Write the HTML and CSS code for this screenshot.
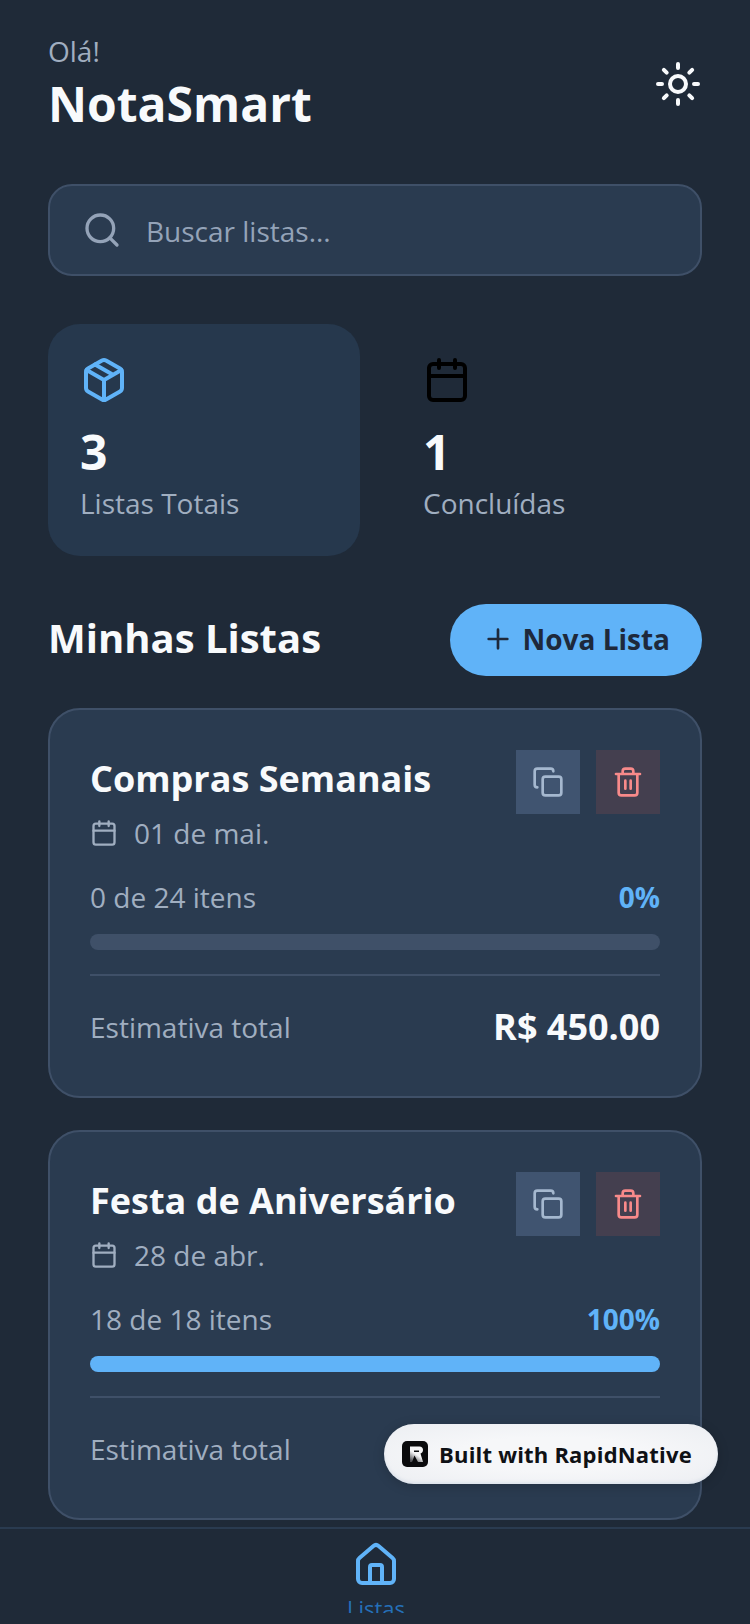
FILE: index.html
```html
<!DOCTYPE html>
<html lang="pt-BR">
<head>
    <meta charset="UTF-8">
    <meta name="viewport" content="width=device-width, initial-scale=1.0">
    <title>NotaSmart</title>
    <link rel="stylesheet" href="styles.css">
</head>
<body>
    <div class="app">
        <main class="content">
            <header class="header">
                <div>
                    <p class="greeting">Olá!</p>
                    <h1 class="brand">NotaSmart</h1>
                </div>
                <svg class="theme-icon" viewBox="0 0 24 24" fill="none" stroke="#f8fafc" stroke-width="2" stroke-linecap="round" stroke-linejoin="round">
                    <circle cx="12" cy="12" r="4"/>
                    <path d="M12 2v2M12 20v2M4.930 4.930l1.410 1.410M17.660 17.660l1.410 1.410M2 12h2M20 12h2M6.340 17.660l-1.410 1.410M19.070 4.930l-1.410 1.410"/>
                </svg>
            </header>

            <div class="search">
                <svg class="search-icon" viewBox="0 0 24 24" fill="none" stroke="#94a3b8" stroke-width="2" stroke-linecap="round" stroke-linejoin="round">
                    <circle cx="11" cy="11" r="8"/>
                    <path d="M21 21l-4.300-4.300"/>
                </svg>
                <span class="search-text">Buscar listas...</span>
            </div>

            <section class="stats">
                <div class="stat stat-active">
                    <svg class="stat-icon" viewBox="0 0 24 24" fill="none" stroke="#60b3f8" stroke-width="2" stroke-linecap="round" stroke-linejoin="round">
                        <path d="M21 8a2 2 0 0 0-1-1.730l-7-4a2 2 0 0 0-2 0l-7 4A2 2 0 0 0 3 8v8a2 2 0 0 0 1 1.730l7 4a2 2 0 0 0 2 0l7-4A2 2 0 0 0 21 16Z"/>
                        <path d="M3.300 7L12 12l8.700-5M12 22V12M7.500 4.270l9 5.150"/>
                    </svg>
                    <div class="stat-value">3</div>
                    <div class="stat-label">Listas Totais</div>
                </div>
                <div class="stat">
                    <svg class="stat-icon" viewBox="0 0 24 24" fill="none" stroke="#000" stroke-width="2" stroke-linecap="round" stroke-linejoin="round">
                        <rect x="3" y="4" width="18" height="18" rx="2"/>
                        <path d="M8 2v4M16 2v4M3 10h18"/>
                    </svg>
                    <div class="stat-value">1</div>
                    <div class="stat-label">Concluídas</div>
                </div>
            </section>

            <div class="section-head">
                <h2 class="section-title">Minhas Listas</h2>
                <button class="new-btn">
                    <svg class="plus-icon" viewBox="0 0 24 24" fill="none" stroke="#1e293b" stroke-width="2" stroke-linecap="round">
                        <path d="M5 12h14M12 5v14"/>
                    </svg>
                    Nova Lista
                </button>
            </div>

            <article class="card">
                <div class="card-top">
                    <div>
                        <h3 class="card-title">Compras Semanais</h3>
                        <div class="card-date">
                            <svg class="date-icon" viewBox="0 0 24 24" fill="none" stroke="#a0aec0" stroke-width="2" stroke-linecap="round" stroke-linejoin="round">
                                <rect x="3" y="4" width="18" height="18" rx="2"/>
                                <path d="M8 2v4M16 2v4M3 10h18"/>
                            </svg>
                            01 de mai.
                        </div>
                    </div>
                    <div class="card-actions">
                        <div class="action action-copy">
                            <svg class="action-icon" viewBox="0 0 24 24" fill="none" stroke="#a5b8cf" stroke-width="2" stroke-linecap="round" stroke-linejoin="round">
                                <rect x="8" y="8" width="14" height="14" rx="2"/>
                                <path d="M4 16c-1.100 0-2-.9-2-2V4c0-1.100.9-2 2-2h10c1.100 0 2 .9 2 2"/>
                            </svg>
                        </div>
                        <div class="action action-delete">
                            <svg class="action-icon" viewBox="0 0 24 24" fill="none" stroke="#f88a8a" stroke-width="2" stroke-linecap="round" stroke-linejoin="round">
                                <path d="M3 6h18M19 6v14a2 2 0 0 1-2 2H7a2 2 0 0 1-2-2V6M8 6V4a2 2 0 0 1 2-2h4a2 2 0 0 1 2 2v2M10 11v6M14 11v6"/>
                            </svg>
                        </div>
                    </div>
                </div>
                <div class="progress-row">
                    <span>0 de 24 itens</span>
                    <span class="percent">0%</span>
                </div>
                <div class="track"><div class="fill" style="width: 0%"></div></div>
                <div class="card-foot">
                    <span class="foot-label">Estimativa total</span>
                    <span class="price">R$ 450.00</span>
                </div>
            </article>

            <article class="card">
                <div class="card-top">
                    <div>
                        <h3 class="card-title">Festa de Aniversário</h3>
                        <div class="card-date">
                            <svg class="date-icon" viewBox="0 0 24 24" fill="none" stroke="#a0aec0" stroke-width="2" stroke-linecap="round" stroke-linejoin="round">
                                <rect x="3" y="4" width="18" height="18" rx="2"/>
                                <path d="M8 2v4M16 2v4M3 10h18"/>
                            </svg>
                            28 de abr.
                        </div>
                    </div>
                    <div class="card-actions">
                        <div class="action action-copy">
                            <svg class="action-icon" viewBox="0 0 24 24" fill="none" stroke="#a5b8cf" stroke-width="2" stroke-linecap="round" stroke-linejoin="round">
                                <rect x="8" y="8" width="14" height="14" rx="2"/>
                                <path d="M4 16c-1.100 0-2-.9-2-2V4c0-1.100.9-2 2-2h10c1.100 0 2 .9 2 2"/>
                            </svg>
                        </div>
                        <div class="action action-delete">
                            <svg class="action-icon" viewBox="0 0 24 24" fill="none" stroke="#f88a8a" stroke-width="2" stroke-linecap="round" stroke-linejoin="round">
                                <path d="M3 6h18M19 6v14a2 2 0 0 1-2 2H7a2 2 0 0 1-2-2V6M8 6V4a2 2 0 0 1 2-2h4a2 2 0 0 1 2 2v2M10 11v6M14 11v6"/>
                            </svg>
                        </div>
                    </div>
                </div>
                <div class="progress-row">
                    <span>18 de 18 itens</span>
                    <span class="percent">100%</span>
                </div>
                <div class="track"><div class="fill" style="width: 100%"></div></div>
                <div class="card-foot">
                    <span class="foot-label">Estimativa total</span>
                </div>
            </article>
        </main>

        <nav class="tabbar">
            <div class="tab">
                <svg class="tab-icon" viewBox="0 0 24 24" fill="none" stroke="#60b3f8" stroke-width="2" stroke-linecap="round" stroke-linejoin="round">
                    <path d="M15 21v-8a1 1 0 0 0-1-1h-4a1 1 0 0 0-1 1v8"/>
                    <path d="M3 10a2 2 0 0 1 .71-1.530l7-6a2 2 0 0 1 2.580 0l7 6A2 2 0 0 1 21 10v9a2 2 0 0 1-2 2H5a2 2 0 0 1-2-2z"/>
                </svg>
                <span class="tab-label">Listas</span>
            </div>
        </nav>

        <div class="built-badge">
            <svg class="badge-logo" viewBox="0 0 26 26">
                <defs>
                    <linearGradient id="logoShade" x1="0.7" y1="0.1" x2="0.2" y2="1">
                        <stop offset="0.45" stop-color="#f6f6f7"/>
                        <stop offset="1" stop-color="#4b4b4f"/>
                    </linearGradient>
                </defs>
                <rect width="26" height="26" rx="5" fill="#0b0b0d"/>
                <path fill-rule="evenodd" fill="url(#logoShade)" d="M8 5.500h9.500c2.200 0 3.500 1.400 3.500 3.500 0 1.800-1 3-2.500 3.500L21 21h-5l-3.500-6.500L10 21H8zM12 9.500h5V11h-5z"/>
            </svg>
            <span>Built with RapidNative</span>
        </div>
    </div>
</body>
</html>
```

FILE: styles.css
```css
* {
    box-sizing: border-box;
}

body {
    margin: 0;
    background-color: #1f2a38;
    font-family: "Open Sans", sans-serif;
}

h1, h2, h3, p {
    margin: 0;
}

svg {
    display: block;
    flex-shrink: 0;
}

.app {
    position: relative;
    width: 750px;
    height: 1624px;
    display: flex;
    flex-direction: column;
    overflow: hidden;
}

.content {
    flex: 1;
    min-height: 0;
    overflow: hidden;
    padding: 32px 48px 0;
}

.header {
    display: flex;
    justify-content: space-between;
    align-items: center;
}

.greeting {
    font-size: 28px;
    line-height: 38px;
    color: #a0aec0;
}

.brand {
    margin-top: 2px;
    font-size: 48px;
    line-height: 64px;
    font-weight: 700;
    color: #f8fafc;
}

.theme-icon {
    width: 48px;
    height: 48px;
}

.search {
    display: flex;
    align-items: center;
    gap: 24px;
    height: 92px;
    margin-top: 48px;
    padding: 0 32px;
    background-color: #2a3b50;
    border: 2px solid #3f5068;
    border-radius: 24px;
}

.search-icon {
    width: 40px;
    height: 40px;
}

.search-text {
    padding-top: 2px;
    font-size: 28px;
    color: #94a3b8;
}

.stats {
    display: flex;
    margin-top: 48px;
}

.stat {
    width: 312px;
    height: 232px;
    padding: 32px;
    border-radius: 32px;
}

.stat-active {
    width: 313px;
    background-color: #26384d;
}

.stat + .stat {
    margin-left: 31px;
}

.stat-icon {
    width: 48px;
    height: 48px;
}

.stat-value {
    margin-top: 16px;
    font-size: 48px;
    line-height: 64px;
    font-weight: 700;
    color: #f8fafc;
}

.stat-label {
    font-size: 28px;
    line-height: 38px;
    color: #a0aec0;
}

.section-head {
    display: flex;
    justify-content: space-between;
    align-items: center;
    margin-top: 48px;
}

.section-title {
    padding-bottom: 6px;
    font-size: 40px;
    font-weight: 700;
    color: #f8fafc;
}

.new-btn {
    display: flex;
    align-items: center;
    gap: 8px;
    height: 72px;
    padding: 0 32px 2px;
    border: none;
    border-radius: 36px;
    background-color: #60b3f8;
    color: #1e293b;
    font-family: inherit;
    font-size: 28px;
    font-weight: 700;
}

.plus-icon {
    width: 32px;
    height: 32px;
}

.card {
    height: 390px;
    margin-top: 32px;
    padding: 40px;
    background-color: #2a3b50;
    border: 2px solid #3f5068;
    border-radius: 32px;
}

.card-top {
    display: flex;
    justify-content: space-between;
    align-items: flex-start;
}

.card-title {
    font-size: 36px;
    line-height: 58px;
    font-weight: 700;
    color: #f8fafc;
}

.card-date {
    display: flex;
    align-items: center;
    gap: 16px;
    margin-top: 5px;
    font-size: 28px;
    line-height: 40px;
    color: #a0aec0;
}

.date-icon {
    width: 28px;
    height: 28px;
}

.card-actions {
    display: flex;
    gap: 16px;
}

.action {
    width: 64px;
    height: 64px;
    display: flex;
    align-items: center;
    justify-content: center;
}

.action-copy {
    background-color: #405470;
}

.action-delete {
    background-color: #443f4f;
}

.action-icon {
    width: 32px;
    height: 32px;
}

.progress-row {
    display: flex;
    justify-content: space-between;
    margin-top: 24px;
    font-size: 28px;
    line-height: 40px;
    color: #a0aec0;
}

.percent {
    font-weight: 700;
    color: #60b3f8;
}

.track {
    height: 16px;
    margin-top: 17px;
    background-color: #3f5068;
    border-radius: 8px;
    overflow: hidden;
}

.fill {
    height: 100%;
    background-color: #60b3f8;
}

.card-foot {
    display: flex;
    justify-content: space-between;
    align-items: center;
    min-height: 76px;
    margin-top: 24px;
    padding-top: 28px;
    border-top: 2px solid #3f5068;
}

.foot-label {
    font-size: 28px;
    line-height: 40px;
    color: #a0aec0;
}

.price {
    font-size: 36px;
    line-height: 40px;
    font-weight: 700;
    color: #f8fafc;
}

.tabbar {
    flex-shrink: 0;
    height: 97px;
    padding-left: 2px;
    border-top: 2px solid #2a3b50;
    display: flex;
    justify-content: center;
    background-color: #1f2a38;
}

.tab {
    display: flex;
    flex-direction: column;
    align-items: center;
    height: 84px;
    padding-top: 12px;
    overflow: hidden;
}

.tab-icon {
    width: 48px;
    height: 48px;
}

.tab-label {
    margin-top: 4px;
    font-size: 22px;
    line-height: 30px;
    color: #2570b8;
}

/* floating badge over the last card */
.built-badge {
    position: absolute;
    left: 384px;
    top: 1424px;
    width: 334px;
    display: flex;
    align-items: center;
    gap: 11px;
    height: 60px;
    padding: 0 18px;
    border-radius: 30px;
    background: radial-gradient(ellipse at center, #f6f7f9 40%, #eceef2 100%);
    box-shadow: inset 0 -2px 3px rgba(170, 190, 215, 0.25), 0 2px 12px rgba(0, 0, 0, 0.18);
    color: #0f1115;
    font-size: 22px;
    font-weight: 700;
    letter-spacing: 0.2px;
    white-space: nowrap;
}

.badge-logo {
    width: 26px;
    height: 26px;
}
```
